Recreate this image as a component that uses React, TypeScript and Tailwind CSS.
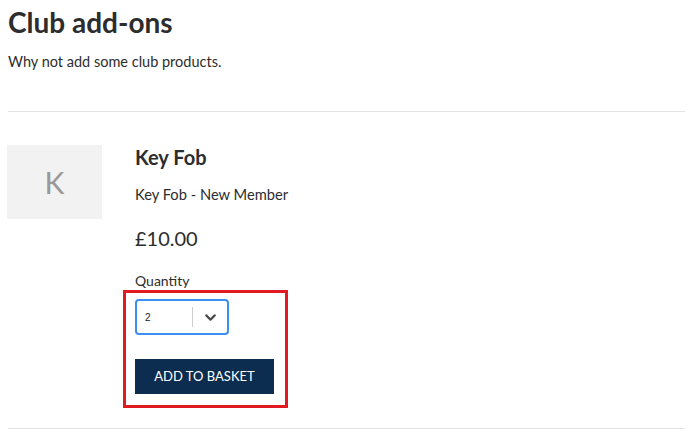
import { ChevronDown } from "lucide-react";

const product = {
  initial: "K",
  name: "Key Fob",
  description: "Key Fob - New Member",
  price: "£10.00",
  quantity: "2",
};

const App = () => {
  return (
    <div className="min-h-[436px] bg-white text-[#2d2d2d] font-['Lato','Noto_Sans',sans-serif]">
      <div className="ml-2 mr-[13px]">
        <h1 className="pt-[3px] text-[28px] leading-[38px] font-bold">Club add-ons</h1>
        <p className="mt-[11px] text-[14.5px] leading-5">Why not add some club products.</p>

        <hr className="mt-[39px] border-t border-[#e3e3e3]" />

        <div className="flex pt-[33px] pb-[34px]">
          <div className="-ml-px w-[95px] h-[74px] bg-[#f2f2f2] flex items-center justify-center text-[30px] text-[#999]">
            {product.initial}
          </div>

          <div className="ml-[33px] flex flex-col">
            <h3 className="text-[20px] leading-6 font-bold">{product.name}</h3>
            <p className="mt-[15px] text-[14.7px] leading-5">{product.description}</p>
            <p className="mt-[22px] text-[20px] leading-6">{product.price}</p>
            <label className="mt-[21px] text-[14px] leading-5">Quantity</label>

            <div className="relative mt-[8px]">
              {/* red highlight drawn over the form */}
              <div className="absolute -left-[12px] -top-[9px] w-[165px] h-[118px] border-[3px] border-[#e11b22] pointer-events-none" />

              <div className="w-[94px] h-[36px] rounded-[4px] border-2 border-[#3d8ef2] flex items-center">
                <span className="pl-[8px] flex-1 text-[10px] text-[#222] font-['Liberation_Sans',sans-serif]">{product.quantity}</span>
                <span className="w-px h-[20px] bg-[#cfcfcf]" />
                <span className="w-[34px] flex items-center justify-center text-[#4a4a4a]">
                  <ChevronDown size={17} strokeWidth={3} />
                </span>
              </div>

              <button className="mt-[24px] w-[139px] h-[35px] bg-[#0c2d4f] text-white text-[13px] uppercase">
                Add to basket
              </button>
            </div>
          </div>
        </div>

        <hr className="border-t border-[#e3e3e3]" />
      </div>
    </div>
  );
};

export default App;
